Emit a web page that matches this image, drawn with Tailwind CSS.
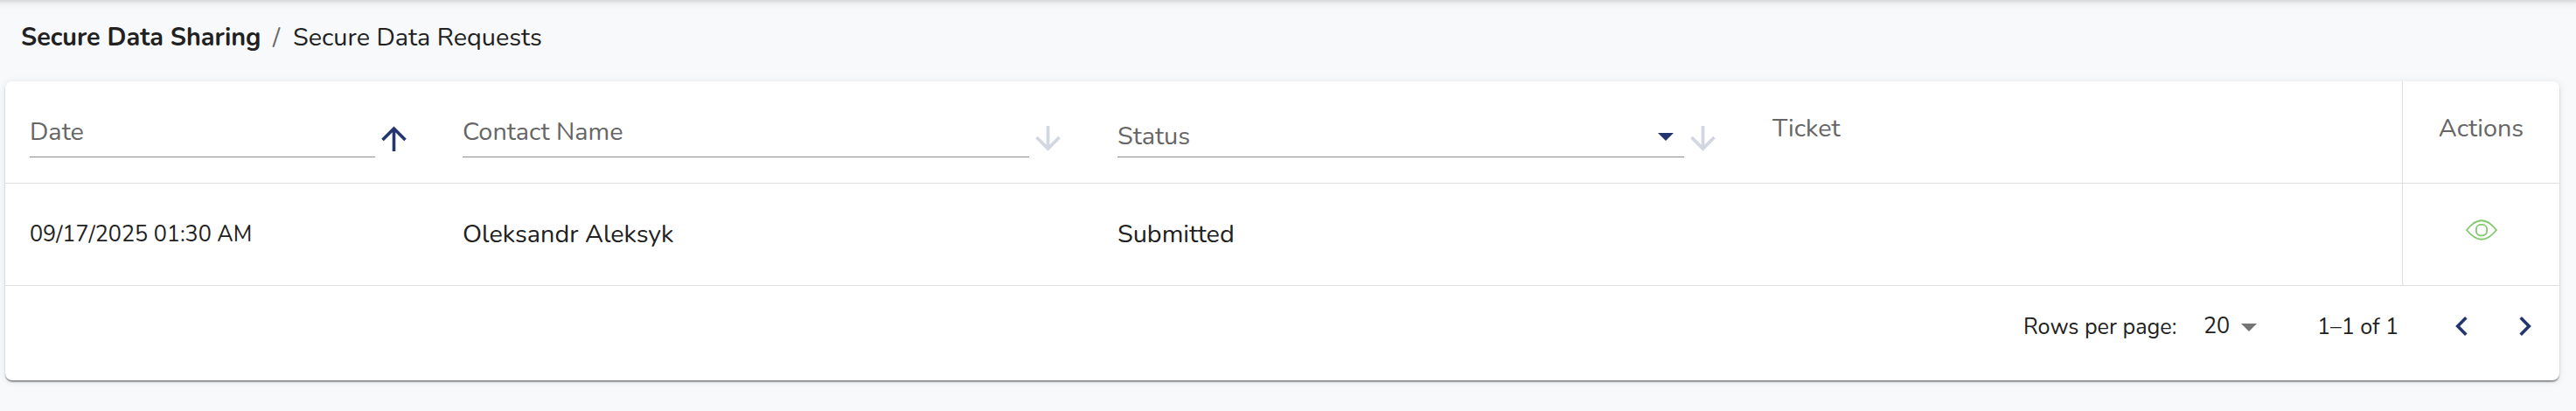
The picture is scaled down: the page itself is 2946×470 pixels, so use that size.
<!DOCTYPE html>
<html lang="en">
<head>
    <meta charset="UTF-8">
    <meta name="viewport" content="width=device-width, initial-scale=1.0">
    <title>Secure Data Requests</title>
    <script src="https://cdn.jsdelivr.net/npm/@tailwindcss/browser@4"></script>
</head>
<body class="bg-[#f8f9fb] h-[470px] overflow-hidden font-[Nunito,'Open_Sans',sans-serif] text-[28.8px] leading-[40px] text-[#212121] whitespace-nowrap">

    <!-- Shadow of the app bar above -->
    <div class="h-3 bg-linear-to-b from-[#d9dadc] via-[#f1f2f4] via-40% to-[#f8f9fb]"></div>

    <!-- Breadcrumbs -->
    <nav class="flex h-[81px] pl-[24px] pt-[11px]">
        <a class="w-[288px] font-bold">Secure Data Sharing</a>
        <span class="w-[23px] text-[#666]">/</span>
        <a>Secure Data Requests</a>
    </nav>

    <main class="ml-[6px] w-[2921px] h-[342px] bg-white rounded-lg shadow-[0_2px_2px_-1px_rgba(0,0,0,0.55),0_2px_2px_0_rgba(0,0,0,0.14),0_1px_8px_0_rgba(0,0,0,0.1)]">
        <!-- Header -->
        <div class="flex h-[117px] border-b border-[#e0e0e0] text-[#666]">
            <div class="flex w-[495px] pl-[28px]">
                <div class="w-[395px] h-[87px] pt-[38px] border-b border-[#8e8e8e]">Date</div>
                <svg class="ml-[7px] mt-[51px] size-[29px]" viewBox="0 0 29 29" fill="none" stroke="#22356f" stroke-width="3.6"><path d="M14.5 29V3M1.5 16L14.5 3L27.5 16"/></svg>
            </div>
            <div class="flex w-[749px] pl-[28px]">
                <div class="w-[648px] h-[87px] pt-[38px] border-b border-[#8e8e8e]">Contact Name</div>
                <svg class="ml-[7px] mt-[51px] size-[29px]" viewBox="0 0 29 29" fill="none" stroke="#d3d7e2" stroke-width="3.8"><path d="M14.5 0V26M1.5 13L14.5 26L27.5 13"/></svg>
            </div>
            <div class="flex w-[749px] pl-[28px]">
                <div class="flex justify-between w-[648px] h-[87px] pt-[43px] pr-[12px] border-b border-[#8e8e8e]">
                    Status
                    <svg class="mt-[16px] w-[18px] h-[9px]" viewBox="0 0 18 9" fill="#22356f"><path d="M0 0H18L9 9Z"/></svg>
                </div>
                <svg class="ml-[7px] mt-[51px] size-[29px]" viewBox="0 0 29 29" fill="none" stroke="#d3d7e2" stroke-width="3.8"><path d="M14.5 0V26M1.5 13L14.5 26L27.5 13"/></svg>
            </div>
            <div class="w-[748px] pl-[28px] pt-[34px]">Ticket</div>
            <div class="w-[180px] pt-[34px] border-l border-[#e0e0e0] text-center">Actions</div>
        </div>

        <!-- Row -->
        <div class="flex h-[117px] border-b border-[#e0e0e0]">
            <div class="w-[495px] pl-[28px] pt-[38px] text-[25.2px]">09/17/2025 01:30 AM</div>
            <div class="w-[749px] pl-[28px] pt-[38px]">Oleksandr Aleksyk</div>
            <div class="w-[749px] pl-[28px] pt-[38px]">Submitted</div>
            <div class="w-[748px]"></div>
            <div class="w-[180px] pt-[41px] border-l border-[#e0e0e0]">
                <svg class="mx-auto w-[36px] h-[24px]" viewBox="0 0 36 24" fill="none" stroke="#82c96e" stroke-width="1.8"><path d="M1 12Q18 -9.5 35 12Q18 33.5 1 12Z"/><rect x="11.9" y="5.9" width="12.2" height="12.4" rx="5"/></svg>
            </div>
        </div>

        <!-- Pagination -->
        <div class="flex pt-[27px] text-[25.2px]">
            <span class="ml-[2308px] w-[206px]">Rows per page:</span>
            <span class="w-[43px] -mt-px">20</span>
            <svg class="mt-[16px] w-[18px] h-[9px]" viewBox="0 0 18 9" fill="#757575"><path d="M0 0H18L9 9Z"/></svg>
            <span class="ml-[69px] w-[158px]">1–1 of 1</span>
            <svg class="mt-[8px] w-[14px] h-[22px]" viewBox="0 0 14 22" fill="none" stroke="#22356f" stroke-width="3.6"><path d="M12.3 1.3L2.7 11L12.3 20.7"/></svg>
            <svg class="ml-[59px] mt-[8px] w-[14px] h-[22px]" viewBox="0 0 14 22" fill="none" stroke="#22356f" stroke-width="3.6"><path d="M1.7 1.3L11.3 11L1.7 20.7"/></svg>
        </div>
    </main>
</body>
</html>
